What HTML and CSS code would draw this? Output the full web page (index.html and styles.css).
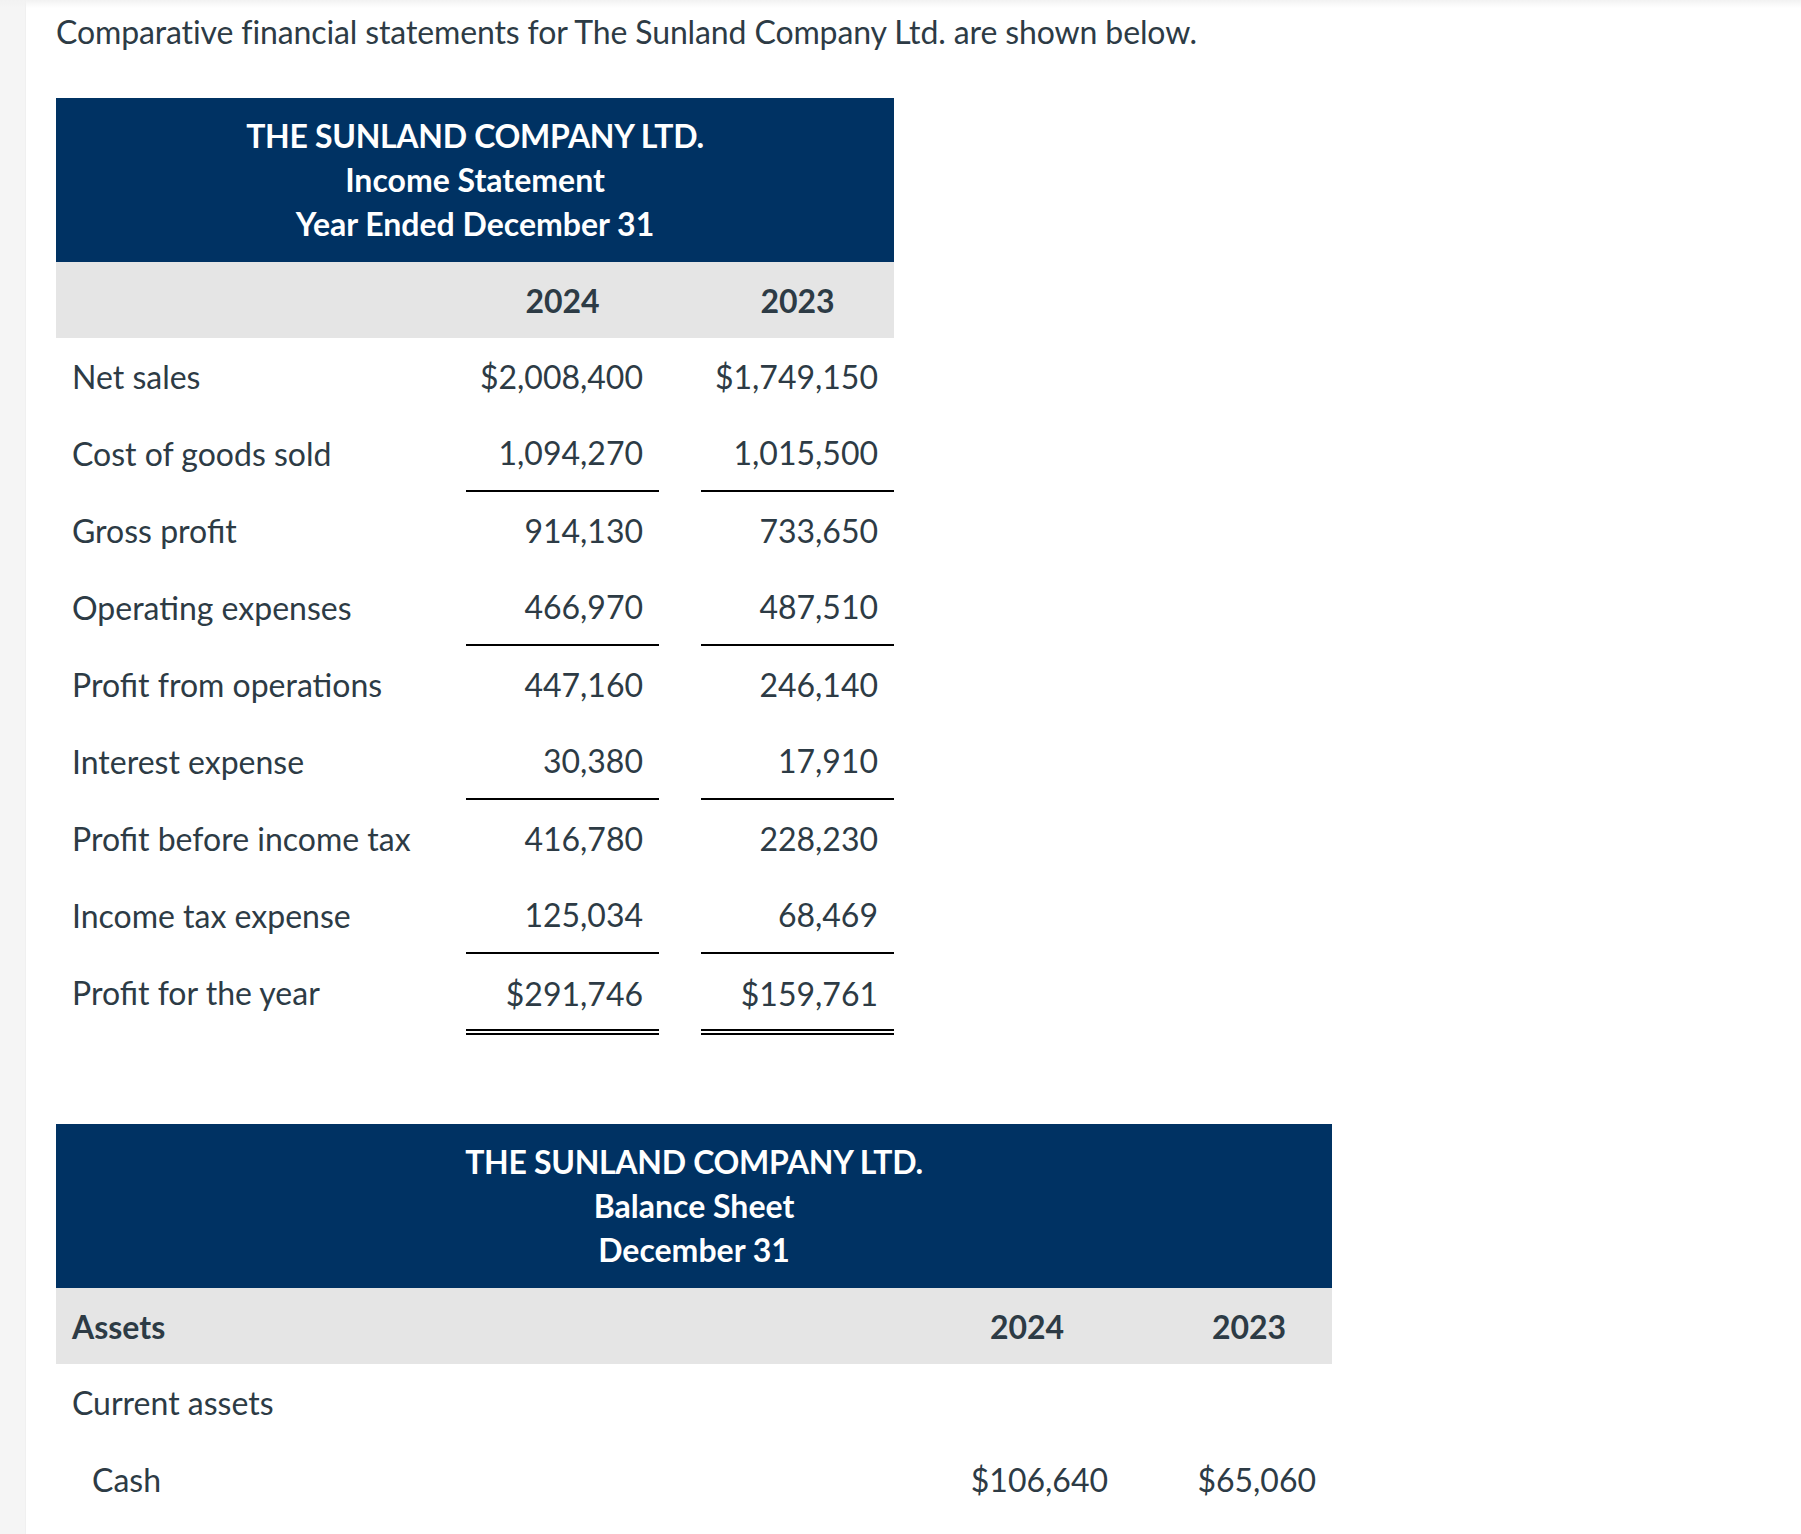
FILE: index.html
```html
<!DOCTYPE html>
<html>
<head>
<meta charset="utf-8">
<link rel="stylesheet" href="styles.css">
</head>
<body>
<div class="page">
  <div class="sidebar"></div>
  <main class="content">
    <p class="intro">Comparative financial statements for The Sunland Company Ltd. are shown below.</p>

    <section class="stmt income">
      <div class="banner">
        <div class="banner-line caps">THE SUNLAND COMPANY LTD.</div>
        <div class="banner-line">Income Statement</div>
        <div class="banner-line">Year Ended December 31</div>
      </div>
      <div class="row head">
        <div class="label"></div>
        <div class="num center">2024</div>
        <div class="num center">2023</div>
      </div>
      <div class="row"><div class="label">Net sales</div><div class="num">$2,008,400</div><div class="num">$1,749,150</div></div>
      <div class="row"><div class="label">Cost of goods sold</div><div class="num line">1,094,270</div><div class="num line">1,015,500</div></div>
      <div class="row"><div class="label">Gross profit</div><div class="num">914,130</div><div class="num">733,650</div></div>
      <div class="row"><div class="label">Operating expenses</div><div class="num line">466,970</div><div class="num line">487,510</div></div>
      <div class="row"><div class="label">Profit from operations</div><div class="num">447,160</div><div class="num">246,140</div></div>
      <div class="row"><div class="label">Interest expense</div><div class="num line">30,380</div><div class="num line">17,910</div></div>
      <div class="row"><div class="label">Profit before income tax</div><div class="num">416,780</div><div class="num">228,230</div></div>
      <div class="row"><div class="label">Income tax expense</div><div class="num line">125,034</div><div class="num line">68,469</div></div>
      <div class="row"><div class="label">Profit for the year</div><div class="num dbl">$291,746</div><div class="num dbl">$159,761</div></div>
    </section>

    <section class="stmt balance">
      <div class="banner">
        <div class="banner-line caps">THE SUNLAND COMPANY LTD.</div>
        <div class="banner-line">Balance Sheet</div>
        <div class="banner-line">December 31</div>
      </div>
      <div class="row head">
        <div class="label strong">Assets</div>
        <div class="num center">2024</div>
        <div class="num center">2023</div>
      </div>
      <div class="row"><div class="label">Current assets</div><div class="num"></div><div class="num"></div></div>
      <div class="row"><div class="label indent">Cash</div><div class="num">$106,640</div><div class="num">$65,060</div></div>
    </section>
  </main>
</div>
</body>
</html>
```

FILE: styles.css
```css
html, body {
  margin: 0;
  padding: 0;
  background: #ffffff;
}

body {
  font-family: Lato, "Open Sans", "Liberation Sans", sans-serif;
  color: #2d3b45;
  height: 1534px;
  overflow: hidden;
}

.page {
  display: flex;
  min-height: 1534px;
  position: relative;
}

.page::before {
  content: "";
  position: absolute;
  left: 0;
  right: 0;
  top: 0;
  height: 8px;
  background: linear-gradient(#f2f2f2, rgba(255,255,255,0));
}

.sidebar {
  width: 25px;
  flex: none;
  background: #f5f5f5;
  border-right: 1px solid #f0f0f0;
}

.content {
  padding-left: 30px;
  flex: 1;
}

.intro {
  margin: 12px 0 0 0;
  font-size: 32px;
  line-height: 40px;
  letter-spacing: -0.12px;
}

.stmt {
  margin-top: 46px;
}

.income {
  width: 838px;
  --c1: 193px;
  --c2: 193px;
}

.balance {
  width: 1276px;
  margin-top: 93px;
  --c1: 194px;
  --c2: 166px;
}

.banner {
  background: #003263;
  color: #ffffff;
  height: 164px;
  box-sizing: border-box;
  padding-top: 16px;
  display: flex;
  flex-direction: column;
  align-items: center;
}

.banner-line {
  font-size: 32px;
  font-weight: 700;
  line-height: 44px;
}

.caps {
  letter-spacing: -0.3px;
}

.row {
  display: grid;
  grid-template-columns: 1fr var(--c1) var(--c2);
  column-gap: 42px;
  height: 77px;
  font-size: 32px;
}

.row.head {
  background: #e5e5e5;
  height: 76px;
  font-weight: 700;
}

.label {
  padding-left: 16px;
  display: flex;
  align-items: center;
}

.label.strong {
  font-weight: 700;
}

.label.indent {
  padding-left: 36px;
}

.num {
  display: flex;
  align-items: center;
  justify-content: flex-end;
  padding-right: 16px;
  box-sizing: border-box;
}

.num.center {
  justify-content: center;
  padding-right: 0;
}

.num.line {
  border-bottom: 2px solid #000000;
}

.num.dbl {
  border-bottom: 6px double #000000;
  margin-bottom: -4px;
  padding-top: 4px;
}
```
